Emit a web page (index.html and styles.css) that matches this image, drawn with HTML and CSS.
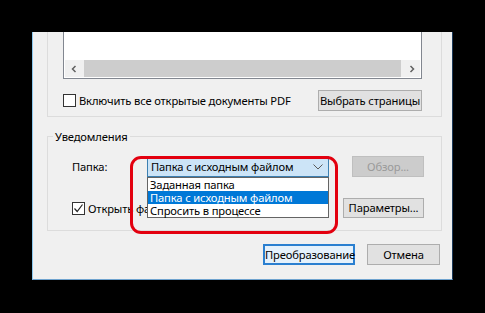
FILE: index.html
```html
<!DOCTYPE html>
<html lang="ru">
<head>
<meta charset="utf-8">
<link rel="stylesheet" href="styles.css">
</head>
<body>
<div class="dialog">
  <div class="group group-top">
    <div class="listbox">
      <div class="list-area"></div>
      <div class="hscroll">
        <span class="sarrow">
          <svg width="8" height="8" viewBox="0 0 8 8"><path d="M5.5 1 L2.5 4 L5.5 7" fill="none" stroke="#606060" stroke-width="1.5"/></svg>
        </span>
        <span class="thumb"></span>
        <span class="sarrow">
          <svg width="8" height="8" viewBox="0 0 8 8"><path d="M2.5 1 L5.5 4 L2.5 7" fill="none" stroke="#606060" stroke-width="1.5"/></svg>
        </span>
      </div>
    </div>
    <div class="row row-include">
      <label class="check"><span class="box"></span><span>Включить все открытые документы PDF</span></label>
      <button class="btn btn-pages">Выбрать страницы</button>
    </div>
  </div>

  <fieldset class="group group-notify">
    <legend>Уведомления</legend>
    <div class="row row-folder">
      <span class="field-label">Папка:</span>
      <div class="combo">
        <span>Папка с исходным файлом</span>
        <svg width="10" height="6" viewBox="0 0 10 6"><path d="M0.5 0.5 L5 5 L9.5 0.5" fill="none" stroke="#5a5a5a" stroke-width="1"/></svg>
        <ul class="dropdown">
          <li>Заданная папка</li>
          <li class="sel">Папка с исходным файлом</li>
          <li>Спросить в процессе</li>
        </ul>
      </div>
      <button class="btn btn-browse" disabled>Обзор...</button>
    </div>
    <div class="row row-open">
      <label class="check"><span class="box checked">
        <svg width="11" height="11" viewBox="0 0 11 11"><path d="M1.5 5.5 L4.2 8.5 L9.5 1.5" fill="none" stroke="#222" stroke-width="1.2"/></svg>
      </span><span class="clipped">Открыть файл после завершения</span></label>
      <button class="btn btn-params">Параметры...</button>
    </div>
    <div class="highlight"></div>
  </fieldset>

  <div class="footer">
    <button class="btn btn-default">Преобразование</button>
    <button class="btn btn-cancel">Отмена</button>
  </div>
</div>
</body>
</html>
```

FILE: styles.css
```css
* { box-sizing: border-box; }
html, body { margin: 0; padding: 0; }
body {
  width: 485px;
  height: 313px;
  background: #000;
  padding-top: 32px;
  font-family: "Noto Sans", "DejaVu Sans", sans-serif;
  font-size: 11.2px;
  letter-spacing: -0.15px;
  color: #000;
  overflow: hidden;
}
.dialog {
  margin-left: 32px;
  width: 421px;
  height: 248px;
  background: #f0f0f0;
  border-left: 1px solid #8cc8ee;
  border-right: 1px solid #1c3a5a;
  border-bottom: 1px solid #6fa3cf;
  padding-left: 14px;
}
.group {
  width: 395px;
  border: 1px solid #dcdcdc;
}
.group-top {
  border-top: none;
  padding: 0 0 5px 15px;
}
.listbox {
  width: 359px;
  height: 47px;
  border: 1px solid #828790;
  border-top: none;
  background: #fff;
  display: flex;
  flex-direction: column;
  padding: 0 1px 1px 1px;
}
.list-area { flex: 1; }
.hscroll {
  height: 17px;
  background: #f0f0f0;
  display: flex;
  align-items: stretch;
}
.sarrow {
  width: 17px;
  display: flex;
  align-items: center;
  justify-content: center;
}
.thumb {
  flex: 1;
  background: #cdcdcd;
  margin: 0 2px;
}
.row { display: flex; align-items: center; }
.row-include {
  margin-top: 11px;
  height: 21px;
  justify-content: space-between;
  padding-right: 19px;
}
.check { display: flex; align-items: center; gap: 3px; white-space: nowrap; }
.box {
  width: 13px;
  height: 13px;
  border: 1px solid #333;
  background: #fff;
  display: flex;
  align-items: center;
  justify-content: center;
  flex: none;
}
.btn {
  font: inherit;
  letter-spacing: inherit;
  color: #000;
  background: #e1e1e1;
  border: 1px solid #adadad;
  padding: 0;
  margin: 0;
  height: 21px;
  line-height: 19px;
  text-align: center;
  white-space: nowrap;
}
.btn-pages { width: 104px; }

.group-notify {
  margin: 12px 0 0 0;
  padding: 0 0 12px 0;
  min-width: 0;
  position: relative;
}
.group-notify legend {
  margin-left: 5px;
  padding: 0 2px;
  line-height: 15px;
}
.row-folder { margin-top: 12px; height: 21px; padding-left: 24px; }
.field-label { width: 75px; }
.combo {
  width: 182px;
  height: 21px;
  background: #cce4f7;
  border: 1px solid #3c7fb1;
  display: flex;
  align-items: center;
  justify-content: space-between;
  padding: 0 5px 0 3px;
  position: relative;
}
.dropdown {
  position: absolute;
  left: -1px;
  top: 20px;
  width: 182px;
  margin: 0;
  padding: 0;
  list-style: none;
  background: #fff;
  border: 1px solid #646464;
  z-index: 2;
}
.dropdown li {
  height: 13px;
  line-height: 13px;
  padding-left: 2px;
}
.dropdown li.sel { background: #0078d7; color: #fff; }
.btn-browse {
  margin-left: 23px;
  width: 72px;
  background: #cccccc;
  border-color: #bfbfbf;
  color: #9a9a9a;
}
.row-open {
  margin-top: 21px;
  height: 20px;
  justify-content: space-between;
  padding: 0 17px 0 24px;
}
.clipped { width: 59px; overflow: hidden; }
.btn-params { width: 81px; height: 20px; line-height: 18px; }
.highlight {
  position: absolute;
  left: 82px;
  top: 12px;
  width: 208px;
  height: 78px;
  border: 3px solid #e3000f;
  border-radius: 11px;
  z-index: 3;
  pointer-events: none;
}
.footer {
  display: flex;
  justify-content: flex-end;
  gap: 12px;
  margin-top: 13px;
  padding-right: 12px;
}
.btn-default {
  width: 92px;
  background: #e5f1fb;
  border: 2px solid #2a7fd0;
  line-height: 17px;
}
.btn-cancel { width: 73px; }
```
